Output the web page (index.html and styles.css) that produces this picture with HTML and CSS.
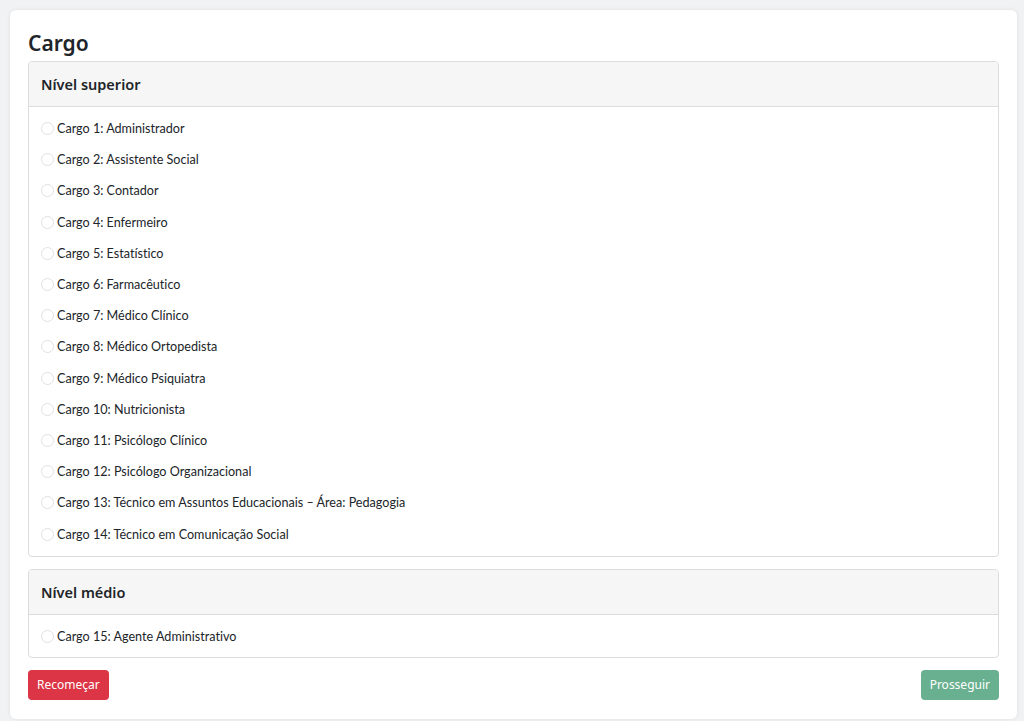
FILE: index.html
```html
<!DOCTYPE html>
<html lang="pt-BR">
<head>
<meta charset="utf-8">
<title>Cargo</title>
<link rel="stylesheet" href="styles.css">
</head>
<body>
<div class="card">
  <h2 class="title">Cargo</h2>
  <div class="panel">
    <div class="panel-header">Nível superior</div>
    <div class="panel-body">
      <label class="opt"><span class="radio"></span>Cargo 1: Administrador</label>
      <label class="opt"><span class="radio"></span>Cargo 2: Assistente Social</label>
      <label class="opt"><span class="radio"></span>Cargo 3: Contador</label>
      <label class="opt"><span class="radio"></span>Cargo 4: Enfermeiro</label>
      <label class="opt"><span class="radio"></span>Cargo 5: Estatístico</label>
      <label class="opt"><span class="radio"></span>Cargo 6: Farmacêutico</label>
      <label class="opt"><span class="radio"></span>Cargo 7: Médico Clínico</label>
      <label class="opt"><span class="radio"></span>Cargo 8: Médico Ortopedista</label>
      <label class="opt"><span class="radio"></span>Cargo 9: Médico Psiquiatra</label>
      <label class="opt"><span class="radio"></span>Cargo 10: Nutricionista</label>
      <label class="opt"><span class="radio"></span>Cargo 11: Psicólogo Clínico</label>
      <label class="opt"><span class="radio"></span>Cargo 12: Psicólogo Organizacional</label>
      <label class="opt"><span class="radio"></span>Cargo 13: Técnico em Assuntos Educacionais – Área: Pedagogia</label>
      <label class="opt"><span class="radio"></span>Cargo 14: Técnico em Comunicação Social</label>
    </div>
  </div>
  <div class="panel">
    <div class="panel-header">Nível médio</div>
    <div class="panel-body short">
      <label class="opt"><span class="radio"></span>Cargo 15: Agente Administrativo</label>
    </div>
  </div>
  <div class="actions">
    <button class="btn btn-danger">Recomeçar</button>
    <button class="btn btn-success" disabled>Prosseguir</button>
  </div>
</div>
</body>
</html>
```
FILE: styles.css
```css
html, body {
  margin: 0;
  padding: 0;
}
body {
  background: #f1f2f4;
  font-family: "Noto Sans", "Open Sans", sans-serif;
  color: #212529;
  padding: 10px 7px 2px 10px;
  height: 721px;
  box-sizing: border-box;
  overflow: hidden;
}
.card {
  background: #fff;
  border-radius: 6px;
  box-shadow: 0 0 4px rgba(0,0,0,0.08);
  padding: 17px 18px 18px 18px;
  height: 100%;
  box-sizing: border-box;
}
.title {
  margin: 0 0 3px 0;
  font-size: 21px;
  font-weight: 600;
  line-height: 32px;
  height: 31px;
}
.panel {
  border: 1px solid #dcdcdc;
  border-radius: 4px;
  margin-bottom: 12px;
  overflow: hidden;
}
.panel-header {
  background: #f6f6f6;
  border-bottom: 1px solid #dcdcdc;
  height: 44px;
  display: flex;
  align-items: center;
  padding: 0 12px;
  font-size: 14.5px;
  font-weight: 600;
}
.panel-body {
  padding: 6px 12px 6px 12px;
  display: flex;
  flex-direction: column;
}
.panel-body.short {
  padding-bottom: 5px;
}
.opt {
  height: 31.2px;
  display: flex;
  align-items: center;
  font-family: "Lato", "Noto Sans", sans-serif;
  font-size: 12.6px;
  font-variant-ligatures: none;
  color: #212529;
}
.radio {
  width: 11px;
  height: 11px;
  border: 1px solid #dfe1e4;
  border-radius: 50%;
  margin-right: 3px;
  flex: none;
}
.actions {
  display: flex;
  justify-content: space-between;
  margin-top: 2px;
}
.btn {
  font-family: inherit;
  font-size: 12px;
  height: 30px;
  padding: 0 9px;
  border: none;
  border-radius: 4px;
  color: #fff;
}
.btn-danger {
  background: #dc3545;
}
.btn-success {
  background: #198754;
  opacity: 0.65;
}
```
